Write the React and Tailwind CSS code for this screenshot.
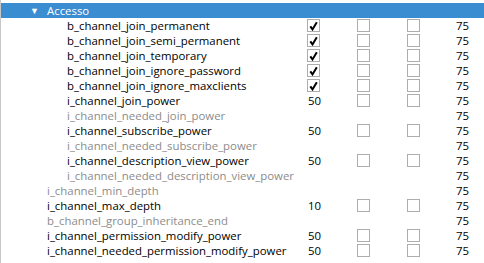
import React from 'react';

// rows of the "Accesso" permission group
const ROWS = [
  { name: 'b_channel_join_permanent', indent: 66, value: 'check', grant: true },
  { name: 'b_channel_join_semi_permanent', indent: 66, value: 'check', grant: true },
  { name: 'b_channel_join_temporary', indent: 66, value: 'check', grant: true },
  { name: 'b_channel_join_ignore_password', indent: 66, value: 'check', grant: true },
  { name: 'b_channel_join_ignore_maxclients', indent: 66, value: 'check', grant: true },
  { name: 'i_channel_join_power', indent: 66, value: '50', grant: true },
  { name: 'i_channel_needed_join_power', indent: 66, dim: true },
  { name: 'i_channel_subscribe_power', indent: 66, value: '50', grant: true },
  { name: 'i_channel_needed_subscribe_power', indent: 66, dim: true },
  { name: 'i_channel_description_view_power', indent: 66, value: '50', grant: true },
  { name: 'i_channel_needed_description_view_power', indent: 66, dim: true },
  { name: 'i_channel_min_depth', indent: 46, dim: true },
  { name: 'i_channel_max_depth', indent: 46, value: '10', grant: true },
  { name: 'b_channel_group_inheritance_end', indent: 46, dim: true },
  { name: 'i_channel_permission_modify_power', indent: 46, value: '50', grant: true },
  { name: 'i_channel_needed_permission_modify_power', indent: 46, value: '50', grant: true },
];

const Box = ({ checked }) => (
  <div className="w-[13px] h-[13px] border border-[#adadad] bg-white flex items-center justify-center">
    {checked && (
      <svg width="9" height="10" viewBox="0 0 9 10">
        <path d="M1.3 5.4 L3.5 8.4 L7.8 1.2" fill="none" stroke="#000" strokeWidth="2" />
      </svg>
    )}
  </div>
);

const Row = ({ row }) => (
  <div className={`grid grid-cols-[306px_50px_50px_40px_22px] h-[15px] items-center ${row.dim ? 'text-[#8c8c8c]' : 'text-black'}`}>
    <div className="whitespace-nowrap" style={{ paddingLeft: row.indent }}>{row.name}</div>
    <div className="flex items-center">
      {row.value === 'check' ? <Box checked /> : row.value ? <span className="pl-[1px]">{row.value}</span> : null}
    </div>
    <div>{row.grant && <Box />}</div>
    <div>{row.grant && <Box />}</div>
    <div className="text-right text-black">75</div>
  </div>
);

export default function App() {
  return (
    <div className="w-[484px] h-[263px] overflow-hidden bg-white pt-[3px] text-[11.4px] leading-[15px] border-l border-[#c8c8c8]" style={{ fontFamily: '"Open Sans", "Noto Sans", sans-serif' }}>
      <div className="h-[15px] bg-[#3a8dd0] text-white flex items-center">
        <span className="pl-[29px] w-[46px] text-[9px]">▼</span>
        <span>Accesso</span>
      </div>
      {ROWS.map(r => <Row key={r.name} row={r} />)}
      <div className="h-[15px] flex items-center translate-y-[4px]">
        <span className="pl-[2px] w-[26px] text-[9px]">▶</span>
        <span>Gruppi</span>
      </div>
    </div>
  );
}
